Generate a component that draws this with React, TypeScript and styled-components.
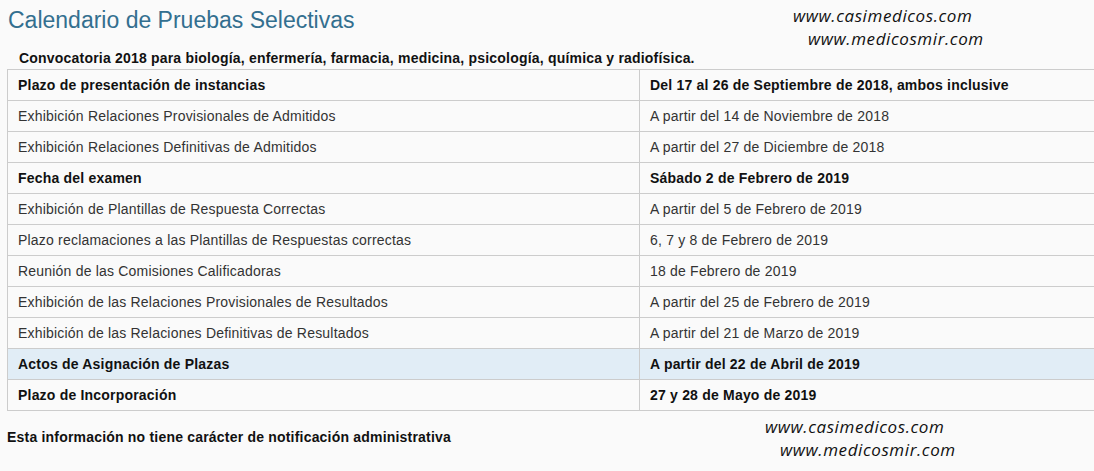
import React from 'react';
import styled, { createGlobalStyle } from 'styled-components';

interface Row {
  label: string;
  date: string;
  bold?: boolean;
  highlight?: boolean;
}

const rows: Row[] = [
  { label: 'Plazo de presentación de instancias', date: 'Del 17 al 26 de Septiembre de 2018, ambos inclusive', bold: true },
  { label: 'Exhibición Relaciones Provisionales de Admitidos', date: 'A partir del 14 de Noviembre de 2018' },
  { label: 'Exhibición Relaciones Definitivas de Admitidos', date: 'A partir del 27 de Diciembre de 2018' },
  { label: 'Fecha del examen', date: 'Sábado 2 de Febrero de 2019', bold: true },
  { label: 'Exhibición de Plantillas de Respuesta Correctas', date: 'A partir del 5 de Febrero de 2019' },
  { label: 'Plazo reclamaciones a las Plantillas de Respuestas correctas', date: '6, 7 y 8 de Febrero de 2019' },
  { label: 'Reunión de las Comisiones Calificadoras', date: '18 de Febrero de 2019' },
  { label: 'Exhibición de las Relaciones Provisionales de Resultados', date: 'A partir del 25 de Febrero de 2019' },
  { label: 'Exhibición de las Relaciones Definitivas de Resultados', date: 'A partir del 21 de Marzo de 2019' },
  { label: 'Actos de Asignación de Plazas', date: 'A partir del 22 de Abril de 2019', bold: true, highlight: true },
  { label: 'Plazo de Incorporación', date: '27 y 28 de Mayo de 2019', bold: true },
];

const App: React.FC = () => {
  return (
    <Page>
      <GlobalStyle />
      <Title>Calendario de Pruebas Selectivas</Title>
      <Watermark $top={4} $left={793}>
        <span>www.casimedicos.com</span>
        <span>www.medicosmir.com</span>
      </Watermark>
      <Subtitle>
        Convocatoria 2018 para biología, enfermería, farmacia, medicina, psicología, química y radiofísica.
      </Subtitle>
      <Table>
        <tbody>
          {rows.map((row) => (
            <Tr key={row.label} $highlight={row.highlight}>
              <LabelCell $bold={row.bold}>{row.label}</LabelCell>
              <Td $bold={row.bold}>{row.date}</Td>
            </Tr>
          ))}
        </tbody>
      </Table>
      <Note>Esta información no tiene carácter de notificación administrativa</Note>
      <Watermark $top={415} $left={765}>
        <span>www.casimedicos.com</span>
        <span>www.medicosmir.com</span>
      </Watermark>
    </Page>
  );
};

export default App;

const GlobalStyle = createGlobalStyle`
  html, body {
    margin: 0;
    padding: 0;
    background: #fafafa;
    overflow: hidden;
  }
  body {
    font-family: "Liberation Sans", Arial, sans-serif;
    color: #111;
  }
`;

const Page = styled.div`
  position: relative;
  width: 1094px;
  height: 471px;
  padding: 0 0 0 7px;
  box-sizing: border-box;
  overflow: hidden;
`;

const Title = styled.h1`
  margin: 0;
  padding: 7px 0 0 1px;
  font-size: 23px;
  line-height: 27px;
  font-weight: 400;
  color: #336f8f;
`;

const Watermark = styled.div<{ $top: number; $left: number }>`
  position: absolute;
  top: ${(p) => p.$top}px;
  left: ${(p) => p.$left}px;
  display: flex;
  flex-direction: column;
  font-family: "Open Sans", "DejaVu Sans", sans-serif;
  font-style: italic;
  font-size: 17px;
  line-height: 23px;
  letter-spacing: 0.6px;
  color: #111;
  pointer-events: none;

  span:nth-child(2) {
    padding-left: 15px;
  }
`;

const Subtitle = styled.p`
  margin: 0;
  padding: 16px 0 0 12px;
  font-size: 14px;
  line-height: 16px;
  letter-spacing: 0.2px;
  font-weight: 700;
  color: #111;
`;

const Table = styled.table`
  width: 1100px;
  border-collapse: collapse;
  margin-top: 3px;
  font-size: 14px;
  letter-spacing: 0.2px;
`;

const Tr = styled.tr<{ $highlight?: boolean }>`
  background: ${(p) => (p.$highlight ? '#e1edf6' : 'transparent')};
`;

const Td = styled.td<{ $bold?: boolean }>`
  height: 30px;
  padding: 0 10px;
  border: 1px solid #cccccc;
  font-weight: ${(p) => (p.$bold ? 700 : 400)};
  color: ${(p) => (p.$bold ? '#111' : '#333')};
  vertical-align: middle;
  white-space: nowrap;
`;

const LabelCell = styled(Td)`
  width: 611px;
`;

const Note = styled.p`
  margin: 0;
  padding: 18px 0 0 0;
  font-size: 14px;
  line-height: 16px;
  letter-spacing: 0.2px;
  font-weight: 700;
  color: #111;
`;
